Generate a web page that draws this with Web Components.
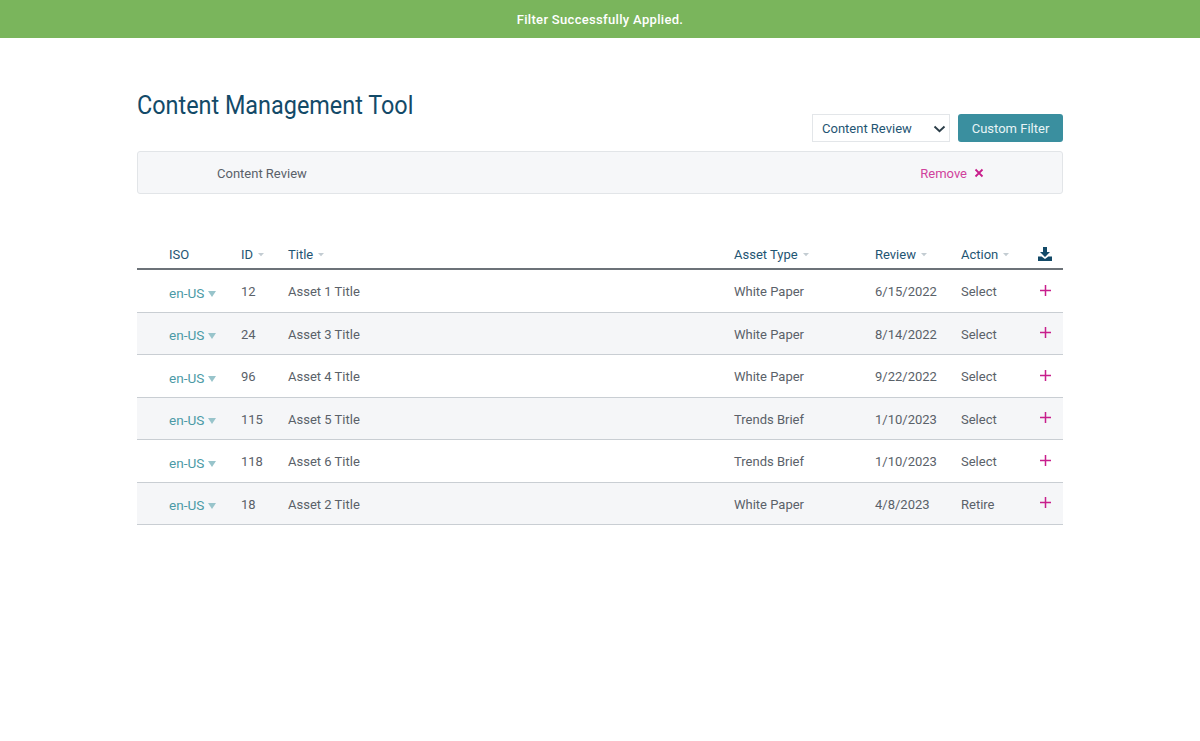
<!DOCTYPE html>
<html lang="en"><head><meta charset="utf-8"><title>Content Management Tool</title>
<style>
html,body{margin:0;padding:0;background:#fff}
body{font-family:Roboto,"Liberation Sans",sans-serif;font-size:13px;color:#5a6169}
</style></head><body>
<app-banner>Filter Successfully Applied.</app-banner>
<app-page>
  <page-header slot="header" heading="Content Management Tool"></page-header>
  <filter-bar slot="filter">Content Review</filter-bar>
  <asset-table slot="table">
    <asset-head></asset-head>
    <asset-row id-num="12" name="Asset 1 Title" type="White Paper" review="6/15/2022" action="Select"></asset-row>
    <asset-row shaded id-num="24" name="Asset 3 Title" type="White Paper" review="8/14/2022" action="Select"></asset-row>
    <asset-row id-num="96" name="Asset 4 Title" type="White Paper" review="9/22/2022" action="Select"></asset-row>
    <asset-row shaded id-num="115" name="Asset 5 Title" type="Trends Brief" review="1/10/2023" action="Select"></asset-row>
    <asset-row id-num="118" name="Asset 6 Title" type="Trends Brief" review="1/10/2023" action="Select"></asset-row>
    <asset-row shaded id-num="18" name="Asset 2 Title" type="White Paper" review="4/8/2023" action="Retire"></asset-row>
  </asset-table>
</app-page>
<script>
const COLS='grid-template-columns:72px 47px 446px 141px 86px 77px 25px;';
function def(name,html){
  customElements.define(name,class extends HTMLElement{
    connectedCallback(){
      if(this.shadowRoot)return;
      const a=k=>this.getAttribute(k)||'';
      this.attachShadow({mode:'open'}).innerHTML=typeof html==='function'?html(a):html;
    }
  });
}
def('app-banner',`<style>:host{display:flex;align-items:center;justify-content:center;height:38px;background:#7ab55c;color:#fff;font-weight:500;font-size:13px;letter-spacing:.32px;font-family:Roboto,sans-serif}</style><slot></slot>`);
def('app-page',`<style>:host{display:block;width:926px;margin:0 auto;padding-top:51px}
.t{margin-top:50px}</style><slot name="header"></slot><slot name="filter"></slot><div class="t"><slot name="table"></slot></div>`);
def('page-header',a=>`<style>
:host{display:flex;justify-content:space-between;align-items:flex-end;height:53px;margin-bottom:9px}
h1{margin:0;align-self:flex-start;font:400 26px/32px Roboto,sans-serif;color:#134a68;white-space:nowrap;transform-origin:left center;transform:scaleX(.9)}
.c{display:flex;gap:8px}
.s{box-sizing:border-box;width:138px;height:28px;border:1px solid #e3e6e9;background:#fff;display:flex;align-items:center;justify-content:space-between;padding:1px 3px 0 9px;color:#1f5573;font-size:13px}
.b{box-sizing:border-box;width:105px;height:28px;padding-top:1px;border-radius:3px;background:#3a8f9f;color:#e8f4f6;font-size:13px;display:flex;align-items:center;justify-content:center}
</style><h1>${a('heading')}</h1><div class="c"><div class="s"><span>Content Review</span><svg width="13" height="8" viewBox="0 0 13 8"><path d="M1.5 1.5 6.5 6.2 11.5 1.5" fill="none" stroke="#2b3d48" stroke-width="1.9"/></svg></div><div class="b">Custom Filter</div></div>`);
def('filter-bar',`<style>
:host{box-sizing:border-box;display:flex;align-items:center;height:43px;background:#f6f7f9;border:1px solid #e2e5e8;border-radius:3px;padding:1px 78px 0 79px;justify-content:space-between;color:#5a6169;font-size:13px}
.r{display:flex;align-items:center;gap:7px;color:#d0429c}
</style><span><slot></slot></span><span class="r">Remove <svg width="10" height="10" viewBox="0 0 10 10"><path d="M1.5 1.5 8.5 8.5M8.5 1.5 1.5 8.5" stroke="#c81e8c" stroke-width="1.8"/></svg></span>`);
def('asset-table',`<style>:host{display:block}</style><slot></slot>`);
const caret='<svg width="6" height="4" viewBox="0 0 6 4" style="margin-left:5px;vertical-align:2px"><path d="M0 0H6L3 3.2Z" fill="#c3ccd2"/></svg>';
def('asset-head',`<style>
:host{display:grid;${COLS}align-items:center;height:26px;box-sizing:border-box;padding-left:32px;padding-bottom:4px;border-bottom:2px solid #6c7278;color:#1f5573;font-size:13px}
svg.d{display:block;margin-top:-1px}
</style><span>ISO</span><span>ID${caret}</span><span>Title${caret}</span><span>Asset Type${caret}</span><span>Review${caret}</span><span>Action${caret}</span>
<svg class="d" width="14" height="14" viewBox="0 0 14 14"><path d="M5 0H9V5H12L7 10 2 5H5Z" fill="#134a68"/><path d="M0 9.5H3.6L7 12 10.4 9.5H14V14H0Z" fill="#134a68"/></svg>`);
def('asset-row',a=>`<style>
:host{display:grid;${COLS}align-items:center;height:42.5px;box-sizing:border-box;padding:2px 0 0 32px;border-bottom:1px solid #c9ced3;color:#5a6169;font-size:13px;background:#fff}
:host([shaded]){background:#f5f6f8}
.i{color:#4b9aa6;padding-top:2px;font-size:13.6px}
.i svg{margin-left:4px;vertical-align:1px}
.p{display:block;margin:-3px 0 0 2px}
</style><span class="i">en-US<svg width="8" height="6" viewBox="0 0 8 6"><path d="M0 0H8L4 6Z" fill="#98c4cb"/></svg></span><span>${a('id-num')}</span><span>${a('name')}</span><span>${a('type')}</span><span>${a('review')}</span><span>${a('action')}</span>
<svg class="p" width="11" height="11" viewBox="0 0 11 11"><path d="M5.5 0V11M0 5.5H11" stroke="#c81e8c" stroke-width="1.5"/></svg>`);
</script>
</body></html>
